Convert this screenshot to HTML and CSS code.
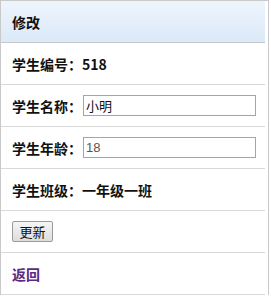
FILE: index.html
```html
<!DOCTYPE html>
<html lang="zh">
<head>
<meta charset="utf-8">
<title>修改</title>
<link rel="stylesheet" href="styles.css">
</head>
<body>
<div class="panel">
  <div class="head">修改</div>
  <div class="row">学生编号：518</div>
  <div class="row"><label>学生名称：</label><input class="field" type="text" value="小明"></div>
  <div class="row"><label>学生年龄：</label><input class="field num" type="text" value="18"></div>
  <div class="row">学生班级：一年级一班</div>
  <div class="row"><button class="btn" type="button">更新</button></div>
  <div class="row"><a class="back" href="#">返回</a></div>
</div>
</body>
</html>
```

FILE: styles.css
```css
html, body {
  margin: 0;
  padding: 0;
  background: #fff;
}
body {
  font-family: "Noto Sans CJK SC", "Microsoft YaHei", sans-serif;
  font-size: 14px;
  color: #111;
}
.panel {
  width: 267px;
  border: 1px solid #c9c9c9;
  border-bottom: none;
}
.head {
  height: 42px;
  box-sizing: border-box;
  display: flex;
  align-items: center;
  padding-left: 11px;
  font-weight: bold;
  background: linear-gradient(#eef5fd, #dbe9f8);
  border-bottom: 1px solid #c8c8c8;
  margin-right: 3px;
}
.row {
  height: 42px;
  box-sizing: border-box;
  display: flex;
  align-items: center;
  padding-left: 11px;
  font-weight: bold;
  border-bottom: 1px solid #d8d8d8;
  margin-right: 3px;
}
.row label {
  margin-right: 1px;
}
.field {
  width: 173px;
  height: 21px;
  box-sizing: border-box;
  border: 1px solid #a5a5a5;
  padding: 0 2px;
  margin: 0;
  font-family: "Noto Sans CJK SC", "Microsoft YaHei", sans-serif;
  font-size: 13px;
  color: #111;
  outline: none;
}
.field.num {
  font-family: "Liberation Sans", Arial, sans-serif;
  color: #555;
}
.btn {
  width: 41px;
  height: 21px;
  box-sizing: border-box;
  margin: 0;
  padding: 0;
  border: 1px solid #9a9a9a;
  border-radius: 2px;
  background: linear-gradient(#f6f6f6, #dddddd);
  font-family: "Noto Sans CJK SC", "Microsoft YaHei", sans-serif;
  font-size: 13px;
  color: #111;
  line-height: 19px;
}
.back {
  color: #5b2a86;
  text-decoration: none;
  font-weight: bold;
}
```
